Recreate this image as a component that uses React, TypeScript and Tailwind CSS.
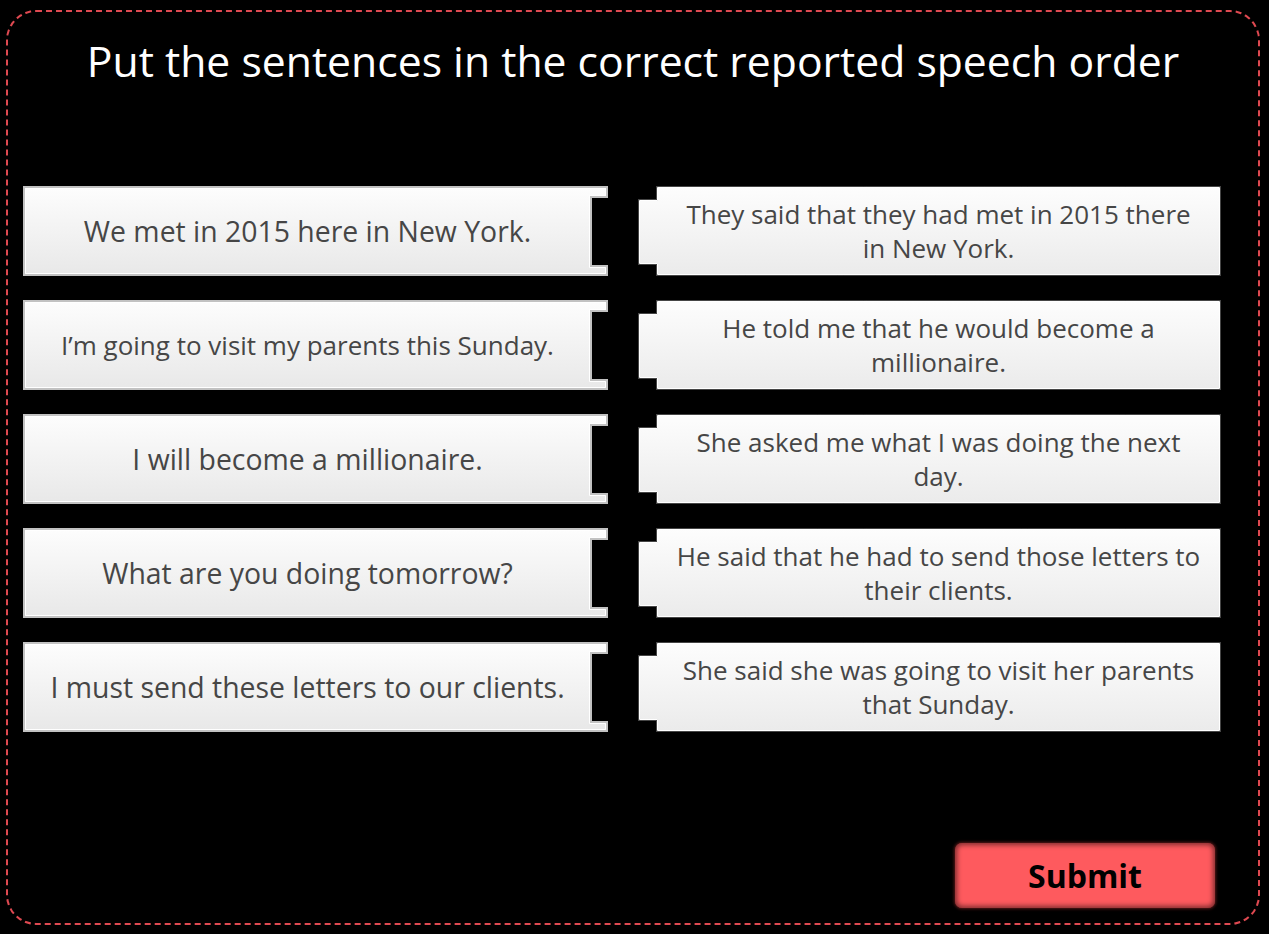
import React from 'react';

const pairs = [
  {
    left: 'We met in 2015 here in New York.',
    right: 'They said that they had met in 2015 there in New York.',
  },
  {
    left: 'I\u2019m going to visit my parents this Sunday.',
    right: 'He told me that he would become a millionaire.',
    small: true,
  },
  {
    left: 'I will become a millionaire.',
    right: 'She asked me what I was doing the next day.',
  },
  {
    left: 'What are you doing tomorrow?',
    right: 'He said that he had to send those letters to their clients.',
  },
  {
    left: 'I must send these letters to our clients.',
    right: 'She said she was going to visit her parents that Sunday.',
  },
];

const font = { fontFamily: '"Open Sans", "Noto Sans", sans-serif' };

// outline of the left piece (notch cut in the right side), inset by d
function leftPath(d: number) {
  return `M${d} ${d} H${585 - d} V${12 - d} H${569 - d} V${79 + d} H${585 - d} V${90 - d} H${d} Z`;
}

// outline of the right piece (tab sticking out on the left), inset by d
function rightPath(d: number) {
  return `M${18 + d} ${d} H${583 - d} V${90 - d} H${18 + d} V${79 - d} H${d} V${13 + d} H${18 + d} Z`;
}

function LeftCard({ text, id, small }: { text: string; id: string; small?: boolean }) {
  return (
    <div className="relative w-[585px] h-[90px] shrink-0">
      <svg className="absolute inset-0" width="585" height="90" viewBox="0 0 585 90">
        <defs>
          <linearGradient id={id} x1="0" y1="0" x2="0" y2="1">
            <stop offset="0" stopColor="#fdfdfd" />
            <stop offset="1" stopColor="#e8e8e8" />
          </linearGradient>
        </defs>
        <path d={leftPath(1)} fill={`url(#${id})`} stroke="#c2c2c2" strokeWidth="2" />
        <path d={leftPath(2.5)} fill="none" stroke="#ffffff" strokeWidth="1" />
      </svg>
      <div
        className={
          'relative h-full flex items-center justify-center pl-[8px] pr-[24px] text-center text-[#464646] leading-[34px] ' +
          (small ? 'text-[26px]' : 'text-[28.4px]')
        }
      >
        {text}
      </div>
    </div>
  );
}

function RightCard({ text, id }: { text: string; id: string }) {
  return (
    <div className="relative w-[583px] h-[90px] shrink-0">
      <svg className="absolute inset-0" width="583" height="90" viewBox="0 0 583 90">
        <defs>
          <linearGradient id={id} x1="0" y1="0" x2="0" y2="1">
            <stop offset="0" stopColor="#fdfdfd" />
            <stop offset="1" stopColor="#ebebeb" />
          </linearGradient>
        </defs>
        <path d={rightPath(1.5)} fill={`url(#${id})`} stroke="#ffffff" strokeWidth="1" />
        <path d={rightPath(0.5)} fill="none" stroke="#8c8c8c" strokeWidth="1" strokeDasharray="1 1" />
      </svg>
      <div className="relative h-full flex items-center justify-center pl-[36px] pr-[18px] text-center text-[#464646] text-[26px] leading-[34px]">
        {text}
      </div>
    </div>
  );
}

export default function App() {
  return (
    <div className="w-[1269px] h-[934px] bg-black pt-[10px] pl-[6px] overflow-hidden" style={font}>
      <div className="w-[1254px] h-[915px] border-2 border-dashed border-[#df4951] rounded-[30px] flex flex-col">
        <h1 className="pt-[19px] h-[80px] leading-[60px] text-center text-white text-[42.7px] font-normal">
          Put the sentences in the correct reported speech order
        </h1>

        <div className="mt-[94px] pl-[15px] flex flex-col gap-[24px]">
          {pairs.map((p, i) => (
            <div key={i} className="flex gap-[30px]">
              <LeftCard text={p.left} id={`lg${i}`} small={p.small} />
              <RightCard text={p.right} id={`rg${i}`} />
            </div>
          ))}
        </div>

        <div className="mt-[111px] flex justify-end pr-[43px]">
          <button className="w-[260px] h-[65px] rounded-[7px] bg-[#fe5a5e] shadow-[inset_0_0_5px_2px_rgba(0,0,0,0.5),0_0_3px_1px_rgba(150,40,40,0.6)] text-black font-bold text-[32px]">
            Submit
          </button>
        </div>
      </div>
    </div>
  );
}
